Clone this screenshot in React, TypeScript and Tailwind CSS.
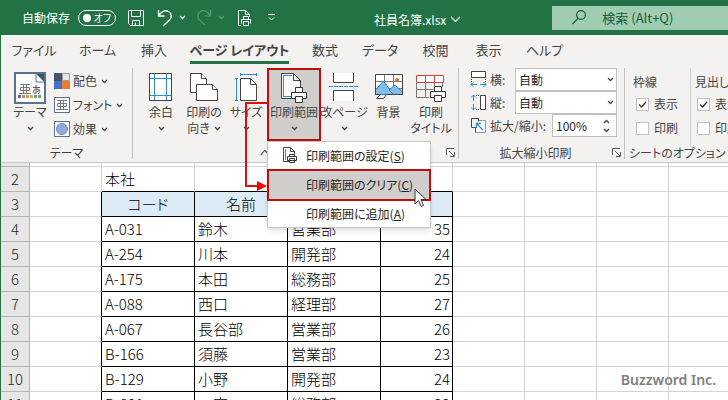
import type { ReactNode } from "react";

const rows = [
  { no: 4, code: "A-031", name: "鈴木", dept: "営業部", age: 35 },
  { no: 5, code: "A-254", name: "川本", dept: "開発部", age: 24 },
  { no: 6, code: "A-175", name: "本田", dept: "総務部", age: 25 },
  { no: 7, code: "A-088", name: "西口", dept: "経理部", age: 27 },
  { no: 8, code: "A-067", name: "長谷部", dept: "営業部", age: 26 },
  { no: 9, code: "B-166", name: "須藤", dept: "営業部", age: 23 },
  { no: 10, code: "B-129", name: "小野", dept: "開発部", age: 24 },
  { no: 11, code: "B-091", name: "一宮", dept: "総務部", age: 29 },
];

const tabs = [
  { label: "ファイル", width: "w-[66px]" },
  { label: "ホーム", width: "w-[61px]" },
  { label: "挿入", width: "w-[52px]" },
  { label: "ページ レイアウト", width: "w-[119px]" },
  { label: "数式", width: "w-[52px]" },
  { label: "データ", width: "w-[58px]" },
  { label: "校閲", width: "w-[53px]" },
  { label: "表示", width: "w-[53px]" },
  { label: "ヘルプ", width: "w-[59px]" },
];

function Chevron({ className = "" }: { className?: string }) {
  return (
    <svg width="7" height="5" viewBox="0 0 7 5" fill="none" stroke="currentColor" strokeWidth="1.3" className={className}>
      <path d="M1 1l2.500 2.500L6 1" />
    </svg>
  );
}

function Printer({ x, y }: { x: number; y: number }) {
  return (
    <g transform={`translate(${x} ${y})`} stroke="#333" fill="#fafafa">
      <path d="M4.500 5.500v-5h7v5" />
      <path d="M.5 5.500h15v6H.5z" />
      <path d="M4.500 9.500h7v6h-7z" />
    </g>
  );
}

function ThemeIcon() {
  return (
    <svg width="32" height="32" viewBox="0 0 32 32" fill="none">
      <path d="M1 1h30v30H1z" fill="#fff" stroke="#5c7390" strokeWidth="2" />
      <path d="M22 2h8v8z" fill="#44546a" />
      <path d="M22 2v8h8" fill="#fff" stroke="#5c7390" />
      <path d="M6 12.500h10M9.500 12.500v9M12.500 12.500v9M6.500 15.500h9v3h-9zM5 21.500h12" stroke="#777" />
      <path d="M19 15.500h7M22 13v8M25 17c-1 3-3 5-5 4s0-4 3-4 4 3 1 5" stroke="#555f70" />
      <path d="M4 23h3v3H4z" fill="#4472c4" />
      <path d="M8 23h3v3H8z" fill="#ed7d31" />
      <path d="M12 23h3v3h-3z" fill="#a5a5a5" />
      <path d="M16 23h3v3h-3z" fill="#e7b700" />
      <path d="M20 23h3v3h-3z" fill="#5b9bd5" />
      <path d="M24 23h3v3h-3z" fill="#70ad47" />
    </svg>
  );
}

function MarginIcon() {
  return (
    <svg width="24" height="30" viewBox="0 0 24 30" fill="none">
      <path d="M.5 1.500h22v27H.5z" fill="#fff" stroke="#444" />
      <path d="M5.500 1v28M17.500 1v28M0 6.500h23M0 23.500h23" stroke="#2b8fc9" />
      <path d="M.5 1.500h22v27H.5z" stroke="#444" />
    </svg>
  );
}

function OrientationIcon() {
  return (
    <svg width="30" height="30" viewBox="0 0 30 30" fill="#fff" stroke="#444">
      <path d="M1.500 1.500h11l5 5v14h-16z" />
      <path d="M12.500 1.500v5h5" />
      <path d="M7.500 12.500h16l5 5v11h-21z" />
      <path d="M23.500 12.500v5h5" />
    </svg>
  );
}

function SizeIcon() {
  return (
    <svg width="24" height="30" viewBox="0 0 24 30" fill="none">
      <path d="M6.500 6.500h10l6 6v16h-16z" fill="#fff" stroke="#444" />
      <path d="M16.500 6.500v6h6" stroke="#444" />
      <path d="M7 2.500h15M6.500 1v3M22.500 1v3M2.500 7v21M1 6.500h3M1 28.500h3" stroke="#2b8fc9" />
    </svg>
  );
}

function PrintAreaIcon() {
  return (
    <svg width="30" height="32" viewBox="0 0 30 32" fill="none">
      <path d="M2.500 1.500h12l7 7v18h-19z" fill="#fafafa" stroke="#444" />
      <path d="M14.500 1.500v7h7" stroke="#444" />
      <path d="M13 3.500H4.500v21H12" stroke="#2b8fc9" />
      <Printer x={12} y={15} />
    </svg>
  );
}

function SmallPrintAreaIcon() {
  return (
    <svg width="16" height="17" viewBox="0 0 16 17" fill="none">
      <path d="M.5.5h7l4 4v10H.5z" fill="#fff" stroke="#444" />
      <path d="M7.500.5v4h4" stroke="#444" />
      <path d="M2.500 2v11" stroke="#2b8fc9" />
      <path d="M6.500 9.500v-2h5v2M4.500 9.500h9v4h-9zM6.500 11.500h5v4h-5z" fill="#fff" stroke="#333" />
    </svg>
  );
}

function BreaksIcon() {
  return (
    <svg width="30" height="30" viewBox="0 0 30 30" fill="none">
      <path d="M4.500 1v9.500h20V1M4.500 29V18.500h20V29" fill="#fff" stroke="#444" />
      <path d="M0 14.500h30" stroke="#2b8fc9" strokeDasharray="4 1" />
    </svg>
  );
}

function BackgroundIcon() {
  return (
    <svg width="28" height="30" viewBox="0 0 28 30" fill="none">
      <path d="M.5 2.500h27v20H.5z" fill="#fff" />
      <path d="M9.500 2v20M18.500 2v20M0 9.500h28M0 16.500h28" stroke="#777" />
      <path d="M.5 18l8-9 10 13.500H.5z" fill="#83beec" stroke="#2b7fc0" />
      <path d="M14 18l6-5 7.500 7v2.500h-9z" fill="#83beec" stroke="#2b7fc0" />
      <circle cx="22" cy="8" r="2" fill="#d87423" />
      <path d="M6 22.500H.5v-20h27v20H11.500l-3 4H1.500l4-4z" stroke="#444" />
    </svg>
  );
}

function PrintTitlesIcon() {
  return (
    <svg width="32" height="30" viewBox="0 0 32 30" fill="none">
      <path d="M1.500 10v15.500H14M10.500 10v15M1.500 17.500h17M27.500 10v5M19.500 10v4" fill="none" stroke="#777" />
      <path d="M1.500 3.500h27v7h-27z" fill="#fff" stroke="#e0433c" />
      <path d="M10.500 3.500v7M19.500 3.500v7" stroke="#e0433c" />
      <Printer x={15} y={14} />
    </svg>
  );
}

function FitIcon({ kind }: { kind: "width" | "height" | "scale" }) {
  return (
    <svg width="17" height="17" viewBox="0 0 17 17" fill="none" className="shrink-0">
      {kind === "width" && (
        <>
          <path d="M1.500.5h14v6h-14z" fill="#fff" stroke="#444" />
          <path d="M1.500 8v3M15.500 8v3" stroke="#444" strokeDasharray="1 1" />
          <path d="M1 13.500h6M10 13.500h6M3.500 11L1 13.500 3.500 16M13.500 11l2.500 2.500-2.500 2.500" stroke="#2b8fc9" />
        </>
      )}
      {kind === "height" && (
        <>
          <path d="M10.500 1.500h5v14h-5z" fill="#fff" stroke="#444" />
          <path d="M6 1.500h3M6 15.500h3" stroke="#444" strokeDasharray="1 1" />
          <path d="M3.500 1v6M3.500 10v6M1 3.500L3.500 1 6 3.500M1 13.500L3.500 16 6 13.500" stroke="#2b8fc9" />
        </>
      )}
      {kind === "scale" && (
        <>
          <path d="M9 3.500h6.500v12h-10" fill="#fff" stroke="#999" />
          <path d="M5.500 15.500v-5h-4v-9h7v3" stroke="#444" />
          <path d="M13 13L6.500 6.500M6.500 11V6.500H11" stroke="#2b8fc9" strokeWidth="1.300" />
        </>
      )}
    </svg>
  );
}

function Launcher() {
  return (
    <button aria-label="詳細設定" className="flex">
      <svg width="10" height="10" viewBox="0 0 10 10" fill="none" stroke="#555">
        <path d="M.5 7V.5H8M3 3l5 5M8.500 4v4.500H4" />
      </svg>
    </button>
  );
}

function BigButton({ icon, label, second, arrow, width }: { icon: ReactNode; label: string; second?: string; arrow?: boolean; width: string }) {
  return (
    <button className={`${width} flex flex-col items-center whitespace-nowrap shrink-0 pt-1 leading-4`}>
      <span className="flex h-8 items-start">{icon}</span>
      <span className="flex h-4 items-center">{label}</span>
      <span className="flex h-4 items-center gap-1">
        {second}
        {arrow && <Chevron />}
      </span>
    </button>
  );
}

function SmallButton({ icon, label }: { icon: ReactNode; label: string }) {
  return (
    <button className="flex h-6 items-center gap-[3px] whitespace-nowrap">
      {icon}
      {label}
      <Chevron className="ml-px" />
    </button>
  );
}

function Check({ label, checked }: { label: string; checked?: boolean }) {
  return (
    <label className="flex h-6 items-center gap-[5px] whitespace-nowrap">
      <span className="grid size-[13px]">
        <input type="checkbox" defaultChecked={checked} className="peer col-start-1 row-start-1 size-[13px] appearance-none border border-[#c0c0c0] bg-white" />
        <svg viewBox="0 0 13 13" fill="none" stroke="#333" strokeWidth="1.300" className="pointer-events-none invisible col-start-1 row-start-1 peer-checked:visible">
          <path d="M3 6.500l2.500 2.500L10 4" />
        </svg>
      </span>
      {label}
    </label>
  );
}

function TitleBar() {
  return (
    <header className="flex h-[35px] shrink-0 items-center overflow-hidden bg-[#217346] text-xs text-white">
      <label className="ml-[21px] flex shrink-0 items-center gap-2 whitespace-nowrap">
        自動保存
        <button role="switch" aria-checked="false" className="flex h-4 w-[38px] items-center justify-between rounded-full border border-white pr-1 pl-1 text-[10px]">
          <span className="size-2 rounded-full bg-white" />
          オフ
        </button>
      </label>
      <button aria-label="上書き保存" className="ml-3 shrink-0">
        <svg width="16" height="16" viewBox="0 0 16 16" fill="none" stroke="currentColor">
          <path d="M.5.5h15v15h-13l-2-2zM3.500.5v6h9v-6M4.500 15.500v-5h7v5M7.500 12.500v3" />
        </svg>
      </button>
      <button aria-label="元に戻す" className="ml-[13px] flex shrink-0 items-center gap-1.5">
        <svg width="16" height="18" viewBox="0 0 16 18" fill="none" stroke="currentColor" strokeWidth="1.400">
          <path d="M1.500 1v6h6M1.500 7C4 2.500 8 .5 11.500 2.500c3.500 2 3.500 6 1 8.500L6 17" />
        </svg>
        <Chevron />
      </button>
      <button aria-label="やり直し" className="ml-2.5 flex shrink-0 items-center gap-1.5 text-[#579977]">
        <svg width="16" height="18" viewBox="0 0 16 18" fill="none" stroke="currentColor" strokeWidth="1.200">
          <path d="M14.500 1v6h-6M14.500 7C12 2.500 8 .5 4.500 2.500c-3.500 2-3.500 6-1 8.500L9 16" />
        </svg>
        <Chevron />
      </button>
      <button aria-label="印刷プレビュー" className="ml-3 shrink-0">
        <svg width="16" height="18" viewBox="0 0 16 18" fill="none" stroke="currentColor">
          <path d="M4 16.500H1.500v-15h7l4 4V8M8.500 1.500v4h4M6.500 10.500v-3h5v3M4.500 14.500v-4h9v4M6.500 12.500h5v4h-5z" />
        </svg>
      </button>
      <button aria-label="クイック アクセス" className="ml-3.5 shrink-0">
        <svg width="9" height="8" viewBox="0 0 9 8" fill="none" stroke="currentColor">
          <path d="M1 .5h7M2 3.500l2.500 2.500L7 3.500" />
        </svg>
      </button>
      <div className="ml-[98px] flex shrink-0 items-center gap-1 pt-1">
        <span>社員名簿.xlsx</span>
        <svg width="11" height="7" viewBox="0 0 11 7" fill="none" stroke="currentColor" strokeWidth="1.200">
          <path d="M1 1l4.500 4.500L10 1" />
        </svg>
      </div>
      <label className="ml-[91px] flex h-6 min-w-0 flex-1 items-center gap-4 bg-[#a0cdb2] pl-5 text-[#185c37]">
        <svg width="14" height="15" viewBox="0 0 14 15" fill="none" stroke="currentColor" strokeWidth="1.200" className="shrink-0">
          <circle cx="9" cy="5" r="4.400" />
          <path d="M6 8.500L.5 14" />
        </svg>
        <input aria-label="検索" placeholder="検索 (Alt+Q)" className="min-w-0 flex-1 bg-transparent text-[13px] outline-none placeholder:text-[#185c37]" />
      </label>
    </header>
  );
}

function PrintAreaMenu() {
  return (
    <div role="menu" className="absolute top-[71px] left-[-2px] z-10 w-[164px] border border-[#c6c6c6] bg-white text-xs text-[#262626] shadow-md">
      <button role="menuitem" className="flex h-[27px] w-full items-center pl-[15px] whitespace-nowrap">
        <span className="w-[23px]">
          <SmallPrintAreaIcon />
        </span>
        <span>印刷範囲の設定(<u>S</u>)</span>
      </button>
      <button role="menuitem" className="-mx-px flex h-8 w-[164px] items-center border-2 border-[#c00d0d] bg-[#d0cecd] pl-[37px] whitespace-nowrap">
        <span>印刷範囲のクリア(<u>C</u>)</span>
      </button>
      <button role="menuitem" className="flex h-[26px] w-full items-center pl-[38px] whitespace-nowrap">
        <span>印刷範囲に追加(<u>A</u>)</span>
      </button>
      {/* pointer on the clear command */}
      <svg width="14" height="20" viewBox="0 0 14 20" className="absolute top-[46px] left-[146px]">
        <path d="M1 1v15l3.500-3.500 2.500 6 2.500-1-2.500-6h5z" fill="#fff" stroke="#333" />
      </svg>
      {/* connector from the ribbon button */}
      <svg width="22" height="90" viewBox="0 0 22 90" fill="none" className="absolute top-[-40px] left-[-23px]">
        <path d="M22 1H1v83h12" stroke="#e30b0b" strokeWidth="2" />
        <path d="M12 79l10 5-10 5z" fill="#f00" />
      </svg>
    </div>
  );
}

function Ribbon() {
  return (
    <div className="flex h-[99px] shrink-0 border-b border-[#c8c6c4] bg-[#f3f2f1] pt-1 pb-[3px] text-xs leading-4 text-[#444]">
      <section className="flex w-[132px] shrink-0 flex-col border-r border-[#c3c1bf]">
        <div className="flex h-[79px] items-start pl-[7px]">
          <BigButton icon={<ThemeIcon />} label="テーマ" arrow width="w-11" />
          <div className="pt-px pl-0.5">
            <SmallButton
              label="配色"
              icon={
                <svg width="16" height="16" viewBox="0 0 16 16">
                  <path d="M0 0h8v8H0z" fill="#44546a" />
                  <path d="M8.500.5h7v7h-7z" fill="#e7e6e6" stroke="#999" />
                  <path d="M0 8h8v8H0z" fill="#4472c4" />
                  <path d="M8 8h8v8H8z" fill="#ed7d31" />
                </svg>
              }
            />
            <SmallButton
              label="フォント"
              icon={
                <svg width="16" height="16" viewBox="0 0 16 16" fill="none">
                  <path d="M.5.5h15v15H.5z" fill="#fff" stroke="#5c6f88" />
                  <path d="M3 3.500h10M6.500 3.500v9M9.500 3.500v9M3.500 6.500h9v3h-9zM2 12.500h12" stroke="#777" />
                </svg>
              }
            />
            <SmallButton
              label="効果"
              icon={
                <svg width="16" height="16" viewBox="0 0 16 16">
                  <path d="M.5.5h15v15H.5z" fill="#fff" stroke="#5c6f88" />
                  <circle cx="8" cy="8" r="5.500" fill="#8faadc" stroke="#6a8bd0" />
                </svg>
              }
            />
          </div>
        </div>
        <div className="text-center leading-3">テーマ</div>
      </section>

      <section className="flex w-[326px] shrink-0 flex-col border-r border-[#c3c1bf]">
        <div className="flex h-[79px] pl-1.5">
          <BigButton icon={<MarginIcon />} label="余白" arrow width="w-[44px]" />
          <BigButton icon={<OrientationIcon />} label="印刷の" second="向き" arrow width="w-[42px]" />
          <BigButton icon={<SizeIcon />} label="サイズ" arrow width="w-[42px]" />
          <div className="relative h-[73px] w-[54px] shrink-0 border-2 border-[#c00d0d] bg-[#d0cecd]">
            <BigButton icon={<PrintAreaIcon />} label="印刷範囲" arrow width="w-[50px] -mt-0.5" />
            <PrintAreaMenu />
          </div>
          <BigButton icon={<BreaksIcon />} label="改ページ" arrow width="w-[46px]" />
          <BigButton icon={<BackgroundIcon />} label="背景" width="w-[43px]" />
          <BigButton icon={<PrintTitlesIcon />} label="印刷" second="タイトル" width="w-[42px]" />
        </div>
        <div className="flex items-center pr-0.5 leading-3">
          <span className="flex-1 text-center">ページ設定</span>
          <Launcher />
        </div>
      </section>

      <section className="flex w-[166px] shrink-0 flex-col border-r border-[#c3c1bf]">
        <div className="flex h-[79px] flex-col pr-[7px] pl-[11px]">
          <label className="flex items-center whitespace-nowrap">
            <FitIcon kind="width" />
            <span className="w-7 pl-[3px]">横:</span>
            <SelectBox />
          </label>
          <label className="flex items-center whitespace-nowrap">
            <FitIcon kind="height" />
            <span className="w-7 pl-[3px]">縦:</span>
            <SelectBox />
          </label>
          <label className="flex items-center whitespace-nowrap">
            <FitIcon kind="scale" />
            <span className="flex-1 pl-[3px]">拡大/縮小:</span>
            <span className="flex h-[23px] w-[65px] items-center border border-[#c0c0c0] bg-white pr-1.5 pl-[3px]">
              <input defaultValue="100%" className="min-w-0 flex-1 bg-transparent text-xs text-[#262626] outline-none" />
              <span className="flex flex-col gap-1">
                <Chevron className="rotate-180" />
                <Chevron />
              </span>
            </span>
          </label>
        </div>
        <div className="flex items-center pr-0.5 leading-3">
          <span className="flex-1 text-center">拡大縮小印刷</span>
          <Launcher />
        </div>
      </section>

      <section className="flex min-w-0 flex-1 flex-col">
        <div className="flex h-[79px] overflow-hidden pl-2">
          <div className="mr-1 w-[58px] shrink-0 border-r border-[#d2d0ce] pt-1">
            <div className="flex h-5 items-center">枠線</div>
            <div className="pl-[3px]">
              <Check label="表示" checked />
              <Check label="印刷" />
            </div>
          </div>
          <div className="w-[59px] shrink-0 pt-1">
            <div className="flex h-5 items-center whitespace-nowrap">見出し</div>
            <div className="pl-0.5">
              <Check label="表示" checked />
              <Check label="印刷" />
            </div>
          </div>
        </div>
        <div className="pl-1 leading-3 whitespace-nowrap">シートのオプション</div>
      </section>
    </div>
  );
}

function SelectBox() {
  return (
    <span className="grid h-[23px] min-w-0 flex-1 items-center">
      <select className="col-start-1 row-start-1 h-full w-full appearance-none border border-[#c0c0c0] bg-white pl-[3px] text-xs text-[#262626]">
        <option>自動</option>
      </select>
      <Chevron className="pointer-events-none col-start-1 row-start-1 mr-[3px] justify-self-end" />
    </span>
  );
}

const rowHead = "border-r border-b border-[#b5b5b5] bg-[#e6e6e6] text-center text-[#262626]";
const blank = "border-r border-b border-[#d4d4d4]";
const boxed = "border-r border-b border-black";

function Blanks() {
  return (
    <>
      <td className={blank} />
      <td className={blank} />
      <td className={blank} />
      <td className={blank} />
    </>
  );
}

function Sheet() {
  return (
    <div className="min-h-0 flex-1 overflow-hidden bg-white">
      <table className="w-[740px] table-fixed border-separate border-spacing-0 text-[15px] leading-5 font-light text-black [&_td]:p-0 [&_th]:p-0 [&_th]:font-light">
        <colgroup>
          <col className="w-[29px]" />
          <col className="w-[72px]" />
          <col className="w-[93px]" />
          <col className="w-[93px]" />
          <col className="w-[93px]" />
          <col className="w-[72px]" />
          <col className="w-[72px]" />
          <col className="w-[72px]" />
          <col className="w-[72px]" />
          <col className="w-[72px]" />
        </colgroup>
        <tbody>
          <tr className="h-1">
            <th className={rowHead} />
            <td className={blank} />
            <td className={blank} />
            <td className={blank} />
            <td className={blank} />
            <td className={blank} />
            <Blanks />
          </tr>
          <tr className="h-[25px]">
            <th className={rowHead}>2</th>
            <td className={blank} />
            <td className="border-r border-b border-r-[#d4d4d4] border-b-black">
              <span className="pl-[3px]">本社</span>
            </td>
            <td className="border-r border-b border-r-[#d4d4d4] border-b-black" />
            <td className="border-r border-b border-r-[#d4d4d4] border-b-black" />
            <td className="border-r border-b border-r-[#d4d4d4] border-b-black" />
            <Blanks />
          </tr>
          <tr className="h-[25px]">
            <th className={rowHead}>3</th>
            <td className="border-r border-b border-r-black border-b-[#d4d4d4]" />
            <th className={`${boxed} bg-[#ddebf7]`}>コード</th>
            <th className={`${boxed} bg-[#ddebf7]`}>名前</th>
            <th className={`${boxed} bg-[#ddebf7]`}>所属</th>
            <th className={`${boxed} bg-[#ddebf7]`}>年齢</th>
            <Blanks />
          </tr>
          {rows.map((row) => (
            <tr key={row.no} className="h-[25px]">
              <th className={rowHead}>{row.no}</th>
              <td className="border-r border-b border-r-black border-b-[#d4d4d4]" />
              <td className={boxed}><span className="pl-[3px]">{row.code}</span></td>
              <td className={boxed}><span className="pl-[3px]">{row.name}</span></td>
              <td className={boxed}><span className="pl-[3px]">{row.dept}</span></td>
              <td className={`${boxed} text-right`}><span className="pr-0.5">{row.age}</span></td>
              <Blanks />
            </tr>
          ))}
        </tbody>
      </table>
    </div>
  );
}

export default function App() {
  return (
    <div className="relative flex h-screen flex-col overflow-hidden border-l border-[#217346] bg-[#f3f2f1] font-['Noto_Sans_CJK_JP',sans-serif] [font-feature-settings:'palt']">
      <TitleBar />
      <nav className="flex h-[29px] shrink-0 bg-[#f3f2f1] text-[13px] text-[#444]">
        {tabs.map((tab) => (
          <button key={tab.label} className={`${tab.width} flex shrink-0 flex-col items-center justify-end whitespace-nowrap`}>
            {tab.label === "ページ レイアウト" ? (
              <span className="border-b-[3px] border-[#217346] leading-[22px] font-bold">{tab.label}</span>
            ) : (
              <span className="border-b-[3px] border-transparent leading-[22px]">{tab.label}</span>
            )}
          </button>
        ))}
      </nav>
      <Ribbon />
      <Sheet />
      <div className="absolute right-3 bottom-2.5 font-['Noto_Sans',sans-serif] text-sm leading-5 font-semibold text-[#808080]">Buzzword Inc.</div>
    </div>
  );
}
